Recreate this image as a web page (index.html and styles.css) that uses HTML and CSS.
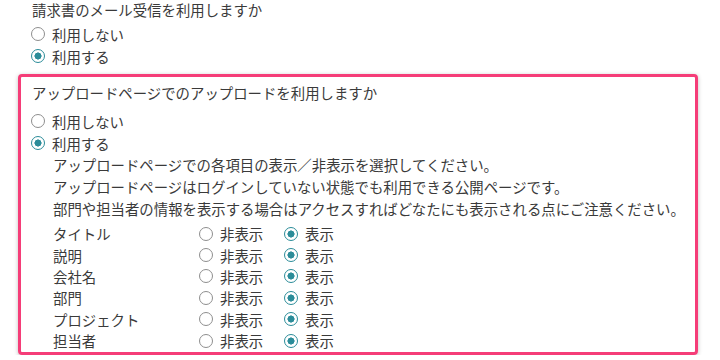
FILE: index.html
```html
<!DOCTYPE html>
<html lang="ja">
<head>
    <meta charset="UTF-8">
    <title>設定</title>
    <link rel="stylesheet" href="styles.css">
</head>
<body>
    <!-- メール受信 -->
    <div class="question top">請求書のメール受信を利用しますか</div>
    <div class="choice"><span class="radio"></span>利用しない</div>
    <div class="choice"><span class="radio checked"></span>利用する</div>

    <!-- アップロードページ -->
    <div class="upload-box">
        <div class="question">アップロードページでのアップロードを利用しますか</div>
        <div class="choices">
            <div class="choice"><span class="radio"></span>利用しない</div>
            <div class="choice"><span class="radio checked"></span>利用する</div>
        </div>

        <div class="notes">
            <p>アップロードページでの各項目の表示／非表示を選択してください。</p>
            <p>アップロードページはログインしていない状態でも利用できる公開ページです。</p>
            <p>部門や担当者の情報を表示する場合はアクセスすればどなたにも表示される点にご注意ください。</p>
        </div>

        <div class="fields">
            <div class="field-row">
                <span class="field-name">タイトル</span>
                <span class="option"><span class="radio"></span>非表示</span>
                <span class="option"><span class="radio checked"></span>表示</span>
            </div>
            <div class="field-row">
                <span class="field-name">説明</span>
                <span class="option"><span class="radio"></span>非表示</span>
                <span class="option"><span class="radio checked"></span>表示</span>
            </div>
            <div class="field-row">
                <span class="field-name">会社名</span>
                <span class="option"><span class="radio"></span>非表示</span>
                <span class="option"><span class="radio checked"></span>表示</span>
            </div>
            <div class="field-row">
                <span class="field-name">部門</span>
                <span class="option"><span class="radio"></span>非表示</span>
                <span class="option"><span class="radio checked"></span>表示</span>
            </div>
            <div class="field-row">
                <span class="field-name">プロジェクト</span>
                <span class="option"><span class="radio"></span>非表示</span>
                <span class="option"><span class="radio checked"></span>表示</span>
            </div>
            <div class="field-row">
                <span class="field-name">担当者</span>
                <span class="option"><span class="radio"></span>非表示</span>
                <span class="option"><span class="radio checked"></span>表示</span>
            </div>
        </div>
    </div>
</body>
</html>
```

FILE: styles.css
```css
/* General Styles */
body {
    font-family: "Noto Sans CJK JP", "Noto Sans", sans-serif;
    font-size: 14.4px;
    color: #3a3a3a;
    margin: 0;
    padding: 0 0 0 32px;
    background-color: #fff;
}

p {
    margin: 0;
    white-space: nowrap;
}

.question {
    line-height: 22px;
}

.question.top {
    line-height: 20px;
    margin-bottom: 3px;
}

/* Radio buttons */
.choice {
    display: flex;
    align-items: center;
    height: 22px;
}

.radio {
    box-sizing: border-box;
    width: 14px;
    height: 14px;
    border: 1.6px solid #8e8e8e;
    border-radius: 50%;
    margin-right: 7px;
    margin-left: -1px;
    flex-shrink: 0;
    background-color: #fff;
}

.radio.checked {
    border: 1.6px solid #2b8c99;
    background: radial-gradient(circle, #2b8c99 0 3.3px, #fff 3.8px);
}

/* Upload box */
.upload-box {
    margin: 7px 0 0 -14px;
    width: 680px;
    box-sizing: border-box;
    border: 3px solid #f53d78;
    border-radius: 4px;
    padding: 5px 11px 0;
    height: 281px;
    box-shadow: 0 1px 4px rgba(0, 0, 0, 0.25);
}

.choices {
    margin-top: 6px;
}

.notes {
    padding-left: 21px;
    line-height: 22px;
}

.fields {
    margin-top: 3px;
    padding-left: 21px;
}

.field-row {
    display: flex;
    align-items: center;
    height: 21.4px;
}

.field-name {
    width: 147px;
}

.option {
    display: flex;
    align-items: center;
    width: 85px;
}
```
